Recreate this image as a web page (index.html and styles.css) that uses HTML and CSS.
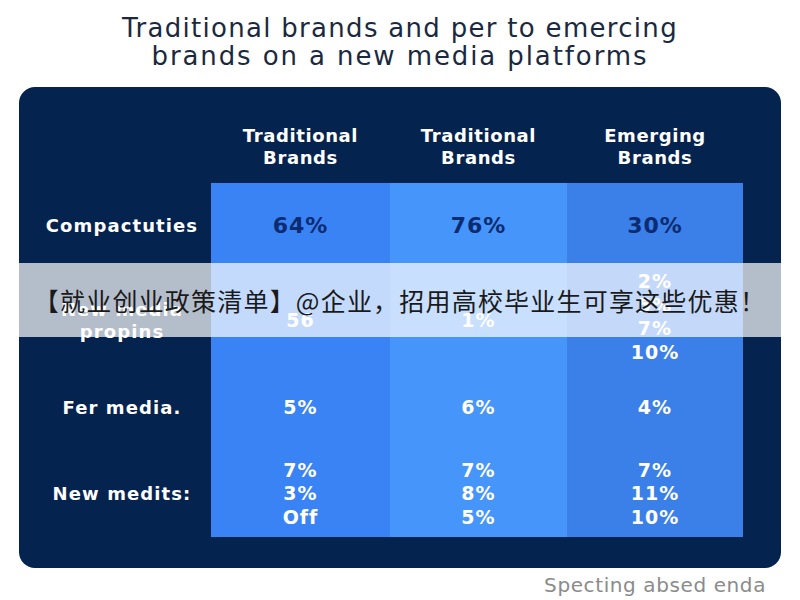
FILE: index.html
```html
<!DOCTYPE html>
<html>
<head>
<meta charset="utf-8">
<link rel="stylesheet" href="styles.css">
</head>
<body>
<div class="page">
  <h1 class="title">Traditional brands and per to emercing<br><span class="title-2">brands on a new media platforms</span></h1>
  <div class="panel">
    <div class="grid">
      <div class="head label"></div>
      <div class="head">Traditional<br>Brands</div>
      <div class="head">Traditional<br>Brands</div>
      <div class="head">Emerging<br>Brands</div>

      <div class="cell label r1">Compactuties</div>
      <div class="cell c1 r1 dark big">64%</div>
      <div class="cell c2 r1 dark big">76%</div>
      <div class="cell c3 r1 dark big">30%</div>

      <div class="cell label r2"><span class="lab2">New media<br>propins</span></div>
      <div class="cell c1 r2"><span class="low">56</span></div>
      <div class="cell c2 r2"><span class="low">1%</span></div>
      <div class="cell c3 r2">2%<br>5%<br>7%<br>10%</div>

      <div class="cell label r3">Fer media.</div>
      <div class="cell c1 r3">5%</div>
      <div class="cell c2 r3">6%</div>
      <div class="cell c3 r3">4%</div>

      <div class="cell label r4">New medits:</div>
      <div class="cell c1 r4">7%<br>3%<br>Off</div>
      <div class="cell c2 r4">7%<br>8%<br>5%</div>
      <div class="cell c3 r4">7%<br>11%<br>10%</div>
    </div>
  </div>
  <div class="footer">Specting absed enda</div>
  <div class="banner">【就业创业政策清单】@企业，招用高校毕业生可享这些优惠！</div>
</div>
</body>
</html>
```
FILE: styles.css
```css
html, body {
  margin: 0;
  padding: 0;
  background: #ffffff;
}
.page {
  position: relative;
  width: 800px;
  height: 600px;
  overflow: hidden;
  font-family: "DejaVu Sans", "Liberation Sans", sans-serif;
}
.title {
  margin: 0;
  padding-top: 14px;
  height: 87px;
  box-sizing: border-box;
  text-align: center;
  font-size: 26px;
  line-height: 28px;
  font-weight: 400;
  color: #1b2940;
  letter-spacing: 1.3px;
}
.title-2 {
  letter-spacing: 1.9px;
}
.panel {
  margin-left: 19px;
  width: 762px;
  height: 481px;
  background: #05234f;
  border-radius: 16px;
  box-sizing: border-box;
}
.grid {
  display: grid;
  grid-template-columns: 192px 179px 177px 176px;
  grid-template-rows: 96px 86px 96px 86px 86px;
  font-family: "DejaVu Sans", "Liberation Sans", sans-serif;
  font-weight: 700;
  color: #ffffff;
}
.head {
  display: flex;
  align-items: flex-end;
  justify-content: center;
  text-align: center;
  padding-bottom: 14px;
  font-size: 18px;
  line-height: 22px;
  letter-spacing: 0.6px;
}
.cell {
  display: flex;
  align-items: center;
  justify-content: center;
  text-align: center;
  font-size: 19px;
  line-height: 23.5px;
  letter-spacing: 1px;
}
.label {
  padding-left: 14px;
  font-size: 18px;
  letter-spacing: 1.1px;
}
.c1 { background: #3a83f4; }
.c2 { background: #4695fb; }
.c3 { background: #3b7fe9; }
.dark { color: #0d2b70; }
.big { font-size: 22px; letter-spacing: 1px; }
.lab2 { padding-top: 8px; line-height: 22px; }
.low { padding-top: 8px; }
.footer {
  text-align: right;
  padding-right: 34px;
  padding-top: 5px;
  font-size: 20px;
  color: #8b8b8b;
  letter-spacing: 0.6px;
}
.banner {
  position: absolute;
  left: 0;
  top: 263px;
  width: 800px;
  height: 74px;
  background: rgba(255, 255, 255, 0.7);
  display: flex;
  align-items: center;
  justify-content: center;
  font-family: "Noto Sans CJK SC", sans-serif;
  font-size: 25px;
  color: #1a1a1a;
  letter-spacing: 1.2px;
}
```
